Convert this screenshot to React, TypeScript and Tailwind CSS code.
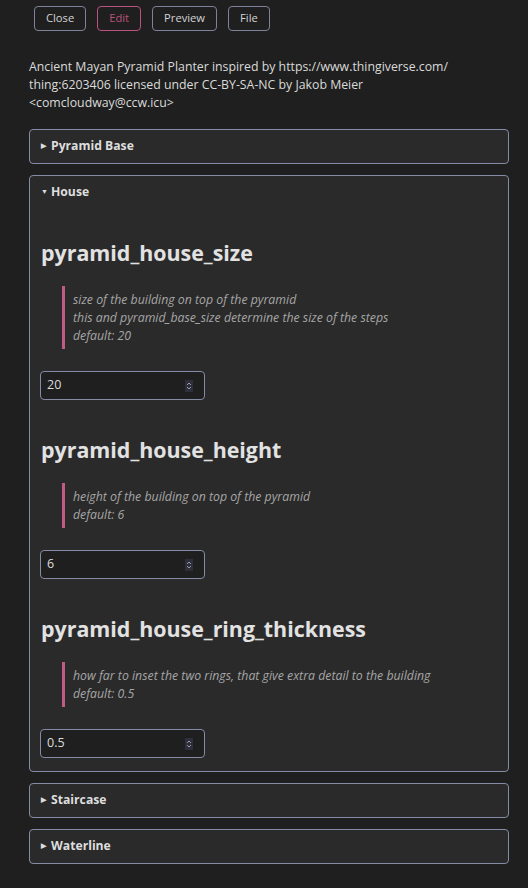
import React from 'react';

type Field = {
  name: string;
  help: string[];
  value: string;
};

const houseFields: Field[] = [
  {
    name: 'pyramid_house_size',
    help: [
      'size of the building on top of the pyramid',
      'this and pyramid_base_size determine the size of the steps',
      'default: 20',
    ],
    value: '20',
  },
  {
    name: 'pyramid_house_height',
    help: ['height of the building on top of the pyramid', 'default: 6'],
    value: '6',
  },
  {
    name: 'pyramid_house_ring_thickness',
    help: [
      'how far to inset the two rings, that give extra detail to the building',
      'default: 0.5',
    ],
    value: '0.5',
  },
];

function Spinner() {
  return (
    <span className="flex h-[12px] w-[8px] items-center justify-center bg-[#2f2e3b]">
      <svg width="6" height="10" viewBox="0 0 6 10" fill="none" stroke="#9a9aa8" strokeWidth="1">
        <path d="M1 4 L3 2 L5 4" />
        <path d="M1 6 L3 8 L5 6" />
      </svg>
    </span>
  );
}

function NumberBox({ value }: { value: string }) {
  return (
    <div className="-ml-px flex h-[29px] w-[165px] items-center justify-between rounded-[4px] border border-[#858aa6] bg-[#1f1f1f] pl-[6px] pr-[11px] text-[12.5px] text-[#dcdcdc]">
      <span>{value}</span>
      <Spinner />
    </div>
  );
}

function FieldBlock({ field, first }: { field: Field; first: boolean }) {
  return (
    <div className={first ? 'mt-[29px]' : 'mt-[35px]'}>
      <h2 className="text-[21.4px] font-bold leading-[30px] text-[#e2e2e2]">{field.name}</h2>
      <blockquote className="ml-[21px] mt-[18px] border-l-[3px] border-[#c05a86] py-[4.5px] pl-[8px] text-[12.3px] italic leading-[18px] text-[#a6a6a6]">
        {field.help.map((line) => (
          <div key={line}>{line}</div>
        ))}
      </blockquote>
      <div className="mt-[22px]">
        <NumberBox value={field.value} />
      </div>
    </div>
  );
}

function Section({ title, open, children }: { title: string; open?: boolean; children?: React.ReactNode }) {
  return (
    <div className="rounded-[4px] border border-[#858aa6] bg-[#2a2a2a]">
      <div className="flex h-[33px] items-center gap-[4px] px-[11px] text-[12.2px] font-bold text-[#dedede]">
        <span className="w-[6px] text-[7px]">{open ? '▼' : '▶'}</span>
        <span>{title}</span>
      </div>
      {open && <div className="px-[11px] pb-[13px]">{children}</div>}
    </div>
  );
}

const btn = 'h-[25px] rounded-[4px] border px-[11px] text-[11.2px]';

export default function App() {
  return (
    <div
      className="min-h-screen bg-[#1f1f1f] text-[#d8d8d8]"
      style={{ fontFamily: '"Open Sans", "Noto Sans", sans-serif' }}
    >
      {/* top toolbar */}
      <div className="flex gap-[11px] px-[34px] pt-[6px]">
        <button className={`${btn} border-[#7e8199] text-[#d4d4d4]`}>Close</button>
        <button className={`${btn} border-[#b9527d] text-[#b9527d]`}>Edit</button>
        <button className={`${btn} border-[#7e8199] text-[#d4d4d4]`}>Preview</button>
        <button className={`${btn} border-[#7e8199] text-[#d4d4d4]`}>File</button>
      </div>

      <div className="px-[29px] pt-[27px] pb-[24px]">
        <p className="text-[12.3px] leading-[18px] text-[#dadada]">
          Ancient Mayan Pyramid Planter inspired by https://www.thingiverse.com/
          <br />
          thing:6203406 licensed under CC-BY-SA-NC by Jakob Meier
          <br />
          &lt;comcloudway@ccw.icu&gt;
        </p>

        <div className="mt-[17px] flex w-[480px] flex-col gap-[11px]">
          <Section title="Pyramid Base" />
          <Section title="House" open>
            {houseFields.map((f, i) => (
              <FieldBlock key={f.name} field={f} first={i === 0} />
            ))}
          </Section>
          <Section title="Staircase" />
          <Section title="Waterline" />
        </div>
      </div>
    </div>
  );
}
